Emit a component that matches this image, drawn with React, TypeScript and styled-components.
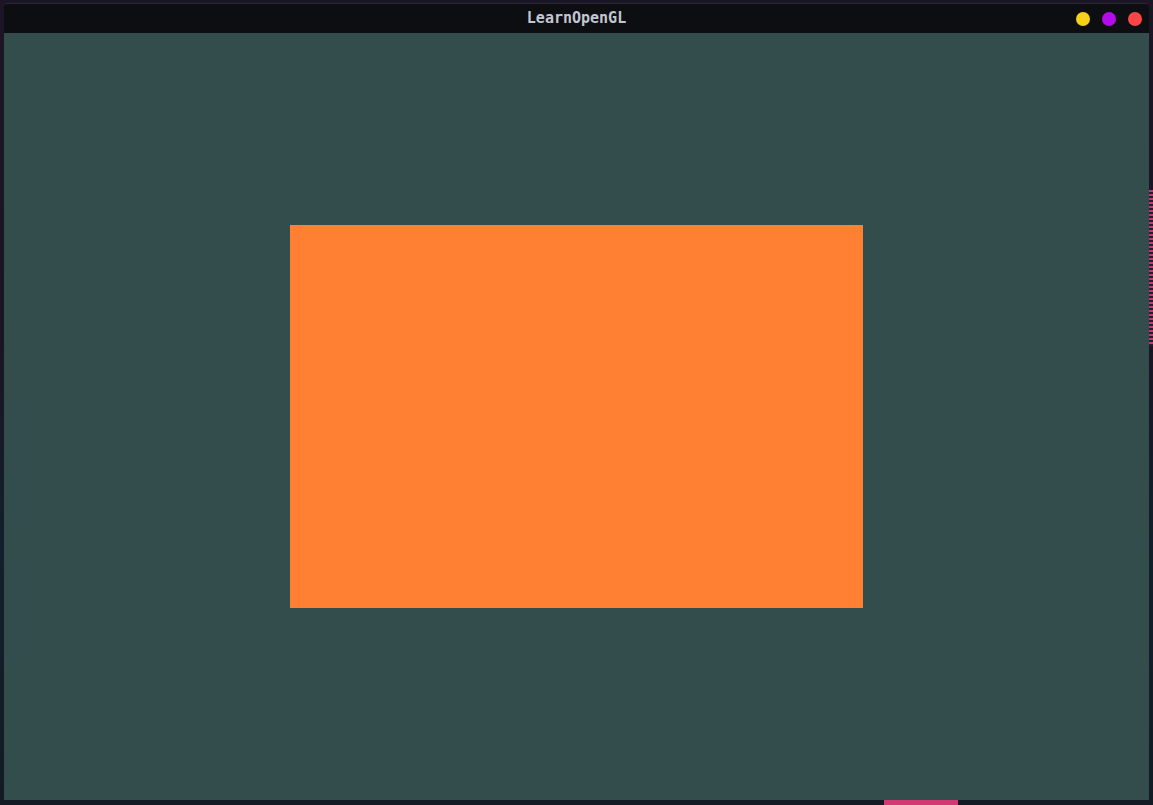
import React from "react";
import styled, { createGlobalStyle } from "styled-components";

const Global = createGlobalStyle`
  html, body { margin: 0; padding: 0; }
  body {
    width: 1153px;
    height: 805px;
    overflow: hidden;
    background: #15121c;
  }
`;

const Desktop = styled.div`
  position: relative;
  width: 1153px;
  height: 805px;
  box-sizing: border-box;
  padding: 3px 4px 5px 4px;
  display: flex;
  background:
    linear-gradient(180deg, #1b1526 0%, #1a1424 40%, #12202c 70%, #131a24 100%);
`;

const Stripe = styled.div`
  position: absolute;
  right: 0;
  top: 190px;
  width: 4px;
  height: 156px;
  background: repeating-linear-gradient(180deg, #c03a78 0 2px, #2a1a2a 2px 4px);
`;

const BottomArt = styled.div`
  position: absolute;
  left: 884px;
  bottom: 0;
  width: 74px;
  height: 5px;
  background: #d23a74;
`;

const Window = styled.div`
  position: relative;
  z-index: 1;
  flex: 1;
  display: flex;
  flex-direction: column;
  border-top: 1px solid #2a2834;
  border-radius: 3px 3px 0 0;
  overflow: hidden;
`;

const TitleBar = styled.div`
  height: 29px;
  background: #0d0e12;
  display: grid;
  grid-template-columns: 1fr auto 1fr;
  align-items: center;
`;

const Title = styled.div`
  grid-column: 2;
  font-family: "DejaVu Sans Mono", "Liberation Mono", monospace;
  font-weight: bold;
  font-size: 15px;
  color: #c3c6d2;
  line-height: 1;
  padding-top: 0px;
`;

const Controls = styled.div`
  grid-column: 3;
  justify-self: end;
  display: flex;
  gap: 12px;
  padding-right: 7px;
`;

const Dot = styled.div<{ $color: string }>`
  width: 14px;
  height: 14px;
  border-radius: 50%;
  background: ${(p) => p.$color};
`;

const Canvas = styled.div`
  flex: 1;
  background: #334d4d;
  display: flex;
  align-items: center;
  justify-content: center;
`;

const Quad = styled.div`
  width: 573px;
  height: 383px;
  background: #ff8033;
`;

export default function App() {
  return (
    <>
      <Global />
      <Desktop>
        <Stripe />
        <BottomArt />
        <Window>
          <TitleBar>
            <Title>LearnOpenGL</Title>
            <Controls>
              <Dot $color="#f7d01a" />
              <Dot $color="#b30ce8" />
              <Dot $color="#ff4545" />
            </Controls>
          </TitleBar>
          <Canvas>
            <Quad />
          </Canvas>
        </Window>
      </Desktop>
    </>
  );
}
